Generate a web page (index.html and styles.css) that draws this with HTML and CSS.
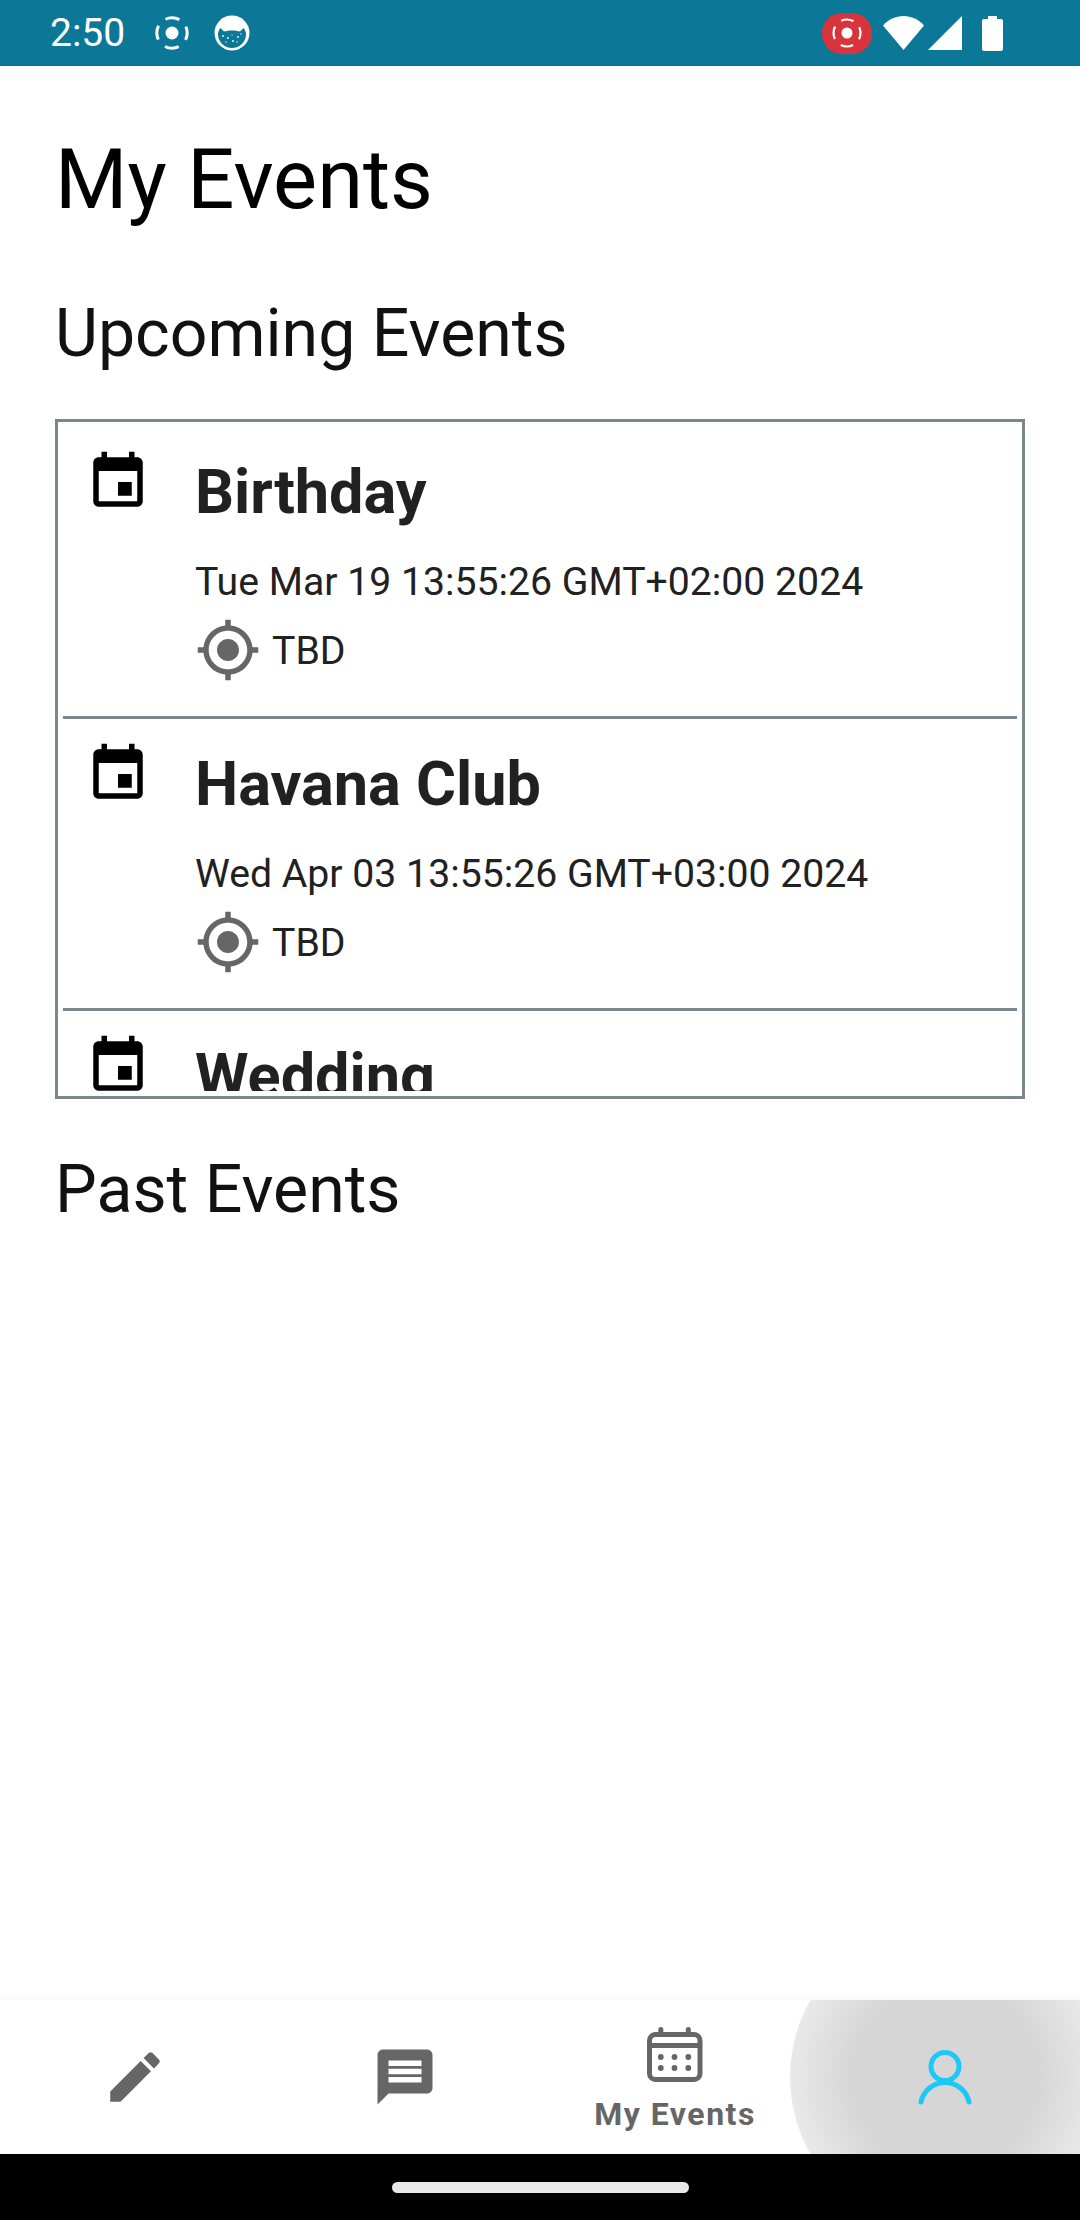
FILE: index.html
```html
<!DOCTYPE html>
<html lang="en">
<head>
<meta charset="utf-8">
<title>My Events</title>
<link rel="stylesheet" href="styles.css">
</head>
<body>
<div class="phone">
  <header class="status">
    <span class="clock">2:50</span>
    <svg class="si first" viewBox="0 0 36 36"><circle cx="18" cy="18" r="6.500" fill="#fff"/><circle cx="18" cy="18" r="15.200" fill="none" stroke="#fff" stroke-width="3" stroke-dasharray="14.300 9.580" stroke-dashoffset="7.150"/></svg>
    <svg class="si cat" viewBox="0 0 36 36"><circle cx="18" cy="18" r="17.500" fill="#fff"/><path d="M4 19c0-2 1-4 2.500-6l3.500 3.500c4-1.500 12-1.500 16 0l3.500-3.500c1.500 2 2.500 4 2.500 6a14 14 0 0 1-28 0z" fill="#0a7896"/><g fill="#fff"><circle cx="9" cy="21" r=".9"/><circle cx="14" cy="23" r=".9"/><circle cx="19" cy="26" r=".9"/><circle cx="24" cy="22" r=".9"/><circle cx="27" cy="19" r=".7"/><circle cx="12" cy="27" r=".7"/><circle cx="23" cy="27" r=".7"/><circle cx="18" cy="20" r=".6"/></g></svg>
    <span class="spacer"></span>
    <span class="pill"><svg class="pill-icon" viewBox="0 0 30 30"><circle cx="15" cy="15" r="5.500" fill="#fff"/><circle cx="15" cy="15" r="13.500" fill="none" stroke="#fff" stroke-width="2.200" stroke-dasharray="12.700 8.500" stroke-dashoffset="6.350"/></svg></span>
    <svg class="wifi" viewBox="0 0 41 34"><path d="M20.500 34 0 9.500C5.500 3.500 12.500 0 20.500 0S35.500 3.500 41 9.500z" fill="#fff"/></svg>
    <svg class="signal" viewBox="0 0 34 34"><path d="M34 0v34H0z" fill="#fff"/></svg>
    <svg class="battery" viewBox="0 0 21 35"><path d="M6 0h9v3h4c1.200 0 2 .8 2 2v28c0 1.200-.8 2-2 2H2c-1.200 0-2-.8-2-2V5c0-1.200.8-2 2-2h4z" fill="#fff"/></svg>
  </header>

  <main class="content">
    <h1 class="page-title">My Events</h1>
    <h2 class="section upcoming">Upcoming Events</h2>
    <div class="box">
      <div class="scroller">
        <article class="event">
          <svg class="cal" viewBox="0 0 24 24"><path d="M17 12h-5v5h5v-5zM16 1v2H8V1H6v2H5c-1.110 0-1.990.9-1.990 2L3 19c0 1.100.89 2 2 2h14c1.100 0 2-.9 2-2V5c0-1.100-.9-2-2-2h-1V1h-2zm3 18H5V8h14v11z"/></svg>
          <div class="details">
            <h3 class="name">Birthday</h3>
            <p class="date">Tue Mar 19 13:55:26 GMT+02:00 2024</p>
            <div class="where">
              <svg class="pin" viewBox="0 0 24 24"><path d="M12 8c-2.210 0-4 1.790-4 4s1.790 4 4 4 4-1.790 4-4-1.790-4-4-4zm8.940 3c-.46-4.170-3.770-7.480-7.940-7.940V1h-2v2.060C6.830 3.520 3.520 6.830 3.060 11H1v2h2.060c.46 4.170 3.770 7.480 7.940 7.940V23h2v-2.060c4.170-.46 7.480-3.770 7.940-7.940H23v-2h-2.060zM12 19c-3.870 0-7-3.130-7-7s3.130-7 7-7 7 3.130 7 7-3.130 7-7 7z"/></svg>
              <span class="place">TBD</span>
            </div>
          </div>
        </article>
        <article class="event">
          <svg class="cal" viewBox="0 0 24 24"><path d="M17 12h-5v5h5v-5zM16 1v2H8V1H6v2H5c-1.110 0-1.990.9-1.990 2L3 19c0 1.100.89 2 2 2h14c1.100 0 2-.9 2-2V5c0-1.100-.9-2-2-2h-1V1h-2zm3 18H5V8h14v11z"/></svg>
          <div class="details">
            <h3 class="name">Havana Club</h3>
            <p class="date">Wed Apr 03 13:55:26 GMT+03:00 2024</p>
            <div class="where">
              <svg class="pin" viewBox="0 0 24 24"><path d="M12 8c-2.210 0-4 1.790-4 4s1.790 4 4 4 4-1.790 4-4-1.790-4-4-4zm8.940 3c-.46-4.170-3.770-7.480-7.940-7.940V1h-2v2.060C6.830 3.520 3.520 6.830 3.060 11H1v2h2.060c.46 4.170 3.770 7.480 7.940 7.940V23h2v-2.060c4.170-.46 7.480-3.770 7.940-7.940H23v-2h-2.060zM12 19c-3.870 0-7-3.130-7-7s3.130-7 7-7 7 3.130 7 7-3.130 7-7 7z"/></svg>
              <span class="place">TBD</span>
            </div>
          </div>
        </article>
        <article class="event">
          <svg class="cal" viewBox="0 0 24 24"><path d="M17 12h-5v5h5v-5zM16 1v2H8V1H6v2H5c-1.110 0-1.990.9-1.990 2L3 19c0 1.100.89 2 2 2h14c1.100 0 2-.9 2-2V5c0-1.100-.9-2-2-2h-1V1h-2zm3 18H5V8h14v11z"/></svg>
          <div class="details">
            <h3 class="name">Wedding</h3>
          </div>
        </article>
      </div>
    </div>
    <h2 class="section past">Past Events</h2>
  </main>

  <nav class="tabs">
    <div class="tab">
      <svg class="tab-icon" viewBox="0 0 24 24"><path d="M3 17.250V21h3.750L17.810 9.940l-3.750-3.750L3 17.250zM20.710 7.040c.39-.39.39-1.020 0-1.410l-2.340-2.340c-.39-.39-1.020-.39-1.410 0l-1.830 1.830 3.750 3.750 1.830-1.830z"/></svg>
    </div>
    <div class="tab">
      <svg class="tab-icon" viewBox="0 0 24 24"><path d="M20 2H4c-1.100 0-1.990.9-1.990 2L2 22l4-4h14c1.100 0 2-.9 2-2V4c0-1.100-.9-2-2-2zm-2 12H6v-2h12v2zm0-3H6V9h12v2zm0-3H6V6h12v2z"/></svg>
    </div>
    <div class="tab labelled">
      <svg class="cal-outline" viewBox="0 0 55.500 55"><rect x="2.500" y="7.500" width="50.500" height="45" rx="6" fill="none" stroke="#666" stroke-width="5"/><path d="M2.500 16h50.500v5H2.500z" fill="#666"/><rect x="11.300" y="0" width="5" height="9" rx="2.500" fill="#666"/><rect x="38.800" y="0" width="5" height="9" rx="2.500" fill="#666"/><g fill="#666"><circle cx="13.800" cy="30" r="2.900"/><circle cx="27.500" cy="30" r="2.900"/><circle cx="41.300" cy="30" r="2.900"/><circle cx="13.800" cy="41" r="2.900"/><circle cx="27.500" cy="41" r="2.900"/><circle cx="41.300" cy="41" r="2.900"/></g></svg>
      <span class="tab-label">My Events</span>
    </div>
    <div class="tab active">
      <span class="ripple"></span>
      <svg class="tab-icon person" viewBox="0 0 66 66"><circle cx="33" cy="22.500" r="14" fill="none" stroke="#1bc9f7" stroke-width="5"/><path d="M9 58A24.500 24.500 0 0 1 57 58" fill="none" stroke="#1bc9f7" stroke-width="5" stroke-linecap="round"/></svg>
    </div>
  </nav>

  <footer class="gesture"><span class="home-bar"></span></footer>
</div>
</body>
</html>
```
FILE: styles.css
```css
* { box-sizing: border-box; }
html, body { margin: 0; padding: 0; background: #fff; }
.phone {
  width: 1080px;
  height: 2220px;
  display: flex;
  flex-direction: column;
  font-family: Roboto, "Noto Sans", sans-serif;
  color: #212121;
  overflow: hidden;
}

/* status bar */
.status {
  height: 66px;
  flex: none;
  background: #0a7896;
  display: flex;
  align-items: center;
  padding: 0 77px 0 50px;
  color: #fff;
}
.clock { font-size: 39px; line-height: 66px; }
.si { width: 36px; height: 36px; flex: none; }
.si.first { margin-left: 29px; }
.si.cat { margin-left: 24px; }
.spacer { flex: 1; }
.pill {
  width: 50px;
  height: 41px;
  border-radius: 20px;
  background: #d9333b;
  display: flex;
  align-items: center;
  justify-content: center;
}
.pill-icon { width: 30px; height: 30px; }
.wifi { width: 41px; height: 34px; margin-left: 11px; }
.signal { width: 34px; height: 34px; margin-left: 4px; }
.battery { width: 21px; height: 35px; margin-left: 20px; }

/* main */
.content {
  flex: 1;
  padding: 0 55px;
  min-height: 0;
}
.page-title {
  margin: 66px 0 0;
  font-size: 83px;
  line-height: 96px;
  font-weight: 400;
  color: #000;
}
.section {
  margin: 0;
  font-size: 66.200px;
  line-height: 84px;
  font-weight: 400;
  color: #111;
}
.upcoming { margin-top: 64px; }
.past { margin-top: 49px; }

.box {
  margin-top: 43px;
  height: 680px;
  border: 3px solid #78888e;
  padding: 5px;
}
.scroller { height: 664px; overflow: hidden; }
.event {
  display: flex;
  align-items: flex-start;
  padding: 22px 0 0 22px;
  height: 292px;
  border-bottom: 3px solid #78888e;
}
.cal { width: 66px; height: 66px; flex: none; fill: #000; }
.details { margin: 5px 0 0 44px; min-width: 0; }
.name {
  margin: 0;
  font-size: 61.200px;
  line-height: 77px;
  font-weight: 700;
  color: #212121;
}
.date {
  margin: 26px 0 0;
  font-size: 39.200px;
  line-height: 50px;
  color: #212121;
}
.where {
  margin-top: 10px;
  display: flex;
  align-items: center;
}
.pin { width: 66px; height: 66px; fill: #666; flex: none; }
.place { margin-left: 11px; padding-top: 2px; font-size: 39.200px; line-height: 50px; }

/* nav */
.tabs {
  height: 154px;
  flex: none;
  display: flex;
  background: #fff;
  box-shadow: 0 -3px 8px rgba(0, 0, 0, .035);
  position: relative;
  overflow: hidden;
  clip-path: inset(-12px 0 0 0);
}
.tab {
  flex: 1;
  position: relative;
  display: flex;
  flex-direction: column;
  align-items: center;
  padding-top: 44px;
}
.tab-icon { width: 66px; height: 66px; fill: #666; flex: none; }
.labelled { padding-top: 27px; }
.cal-outline { width: 55.500px; height: 55px; flex: none; }
.tab-label {
  margin-top: 14px;
  font-size: 32px;
  line-height: 36px;
  font-weight: 700;
  letter-spacing: 1.500px;
  color: #666;
  white-space: nowrap;
}
.ripple {
  position: absolute;
  left: -20px;
  top: -78px;
  width: 310px;
  height: 310px;
  border-radius: 50%;
  background: radial-gradient(circle closest-side, #d6d6d6 0, #d6d6d6 60%, #e9e9e9 100%);
}
.person { position: relative; }

/* gesture bar */
.gesture {
  flex: none;
  height: 66px;
  background: #000;
  display: flex;
  justify-content: center;
  padding-top: 28px;
}
.home-bar {
  width: 297px;
  height: 11px;
  border-radius: 6px;
  background: #e8e8e8;
}
```
